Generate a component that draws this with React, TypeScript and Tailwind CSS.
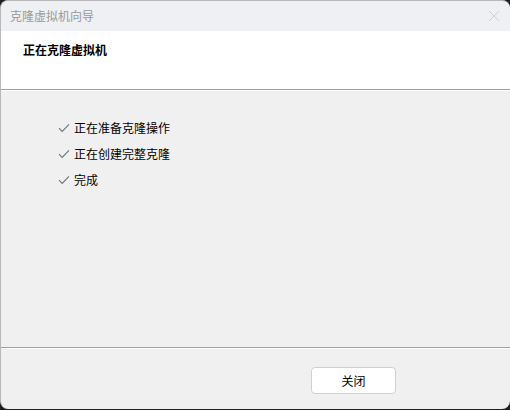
import React from "react";

function Check() {
  return (
    <svg width="12" height="10" viewBox="0 0 12 10" className="shrink-0">
      <path d="M1 5.2 L4.2 8.4 L11 1.4" fill="none" stroke="#6b7480" strokeWidth="1.1" />
    </svg>
  );
}

export default function App() {
  const font = { fontFamily: '"Noto Sans CJK SC", "Noto Sans", sans-serif' };
  return (
    <div className="w-[510px] h-[410px] bg-[#1f1f1f]" style={font}>
      <div className="w-[510px] h-[409px] bg-[#f0f0f0] rounded-[8px] border-l border-t border-[#b8b8b8] overflow-hidden flex flex-col">
        <div className="h-[30px] bg-[#eff0f3] flex items-center justify-between pl-[9px] pr-[10px] shrink-0">
          <span className="text-[12px] text-[#9a9a9a] leading-none">克隆虚拟机向导</span>
          <svg width="12" height="12" viewBox="0 0 12 12">
            <path d="M1 1 L11 11 M11 1 L1 11" stroke="#cfcfd2" strokeWidth="1" />
          </svg>
        </div>
        <div className="h-[58px] bg-white shrink-0 pl-[22px] pt-[13px] leading-none">
          <span className="block text-[12px] leading-[12px] font-bold text-black">正在克隆虚拟机</span>
        </div>
        <div className="h-px bg-[#a0a0a0] shrink-0" />
        <div className="h-px bg-white shrink-0" />
        <div className="flex-1 flex flex-col pl-[57px] pt-[28px] gap-[8px]">
          {["正在准备克隆操作", "正在创建完整克隆", "完成"].map((t) => (
            <div key={t} className="flex items-center gap-[4px] h-[18px]">
              <Check />
              <span className="text-[12px] text-black leading-none">{t}</span>
            </div>
          ))}
        </div>
        <div className="h-px bg-[#a0a0a0] shrink-0" />
        <div className="h-px bg-white shrink-0" />
        <div className="h-[60px] shrink-0 flex items-start pl-[310px] pt-[18px]">
          <button className="w-[85px] h-[27px] bg-white border border-[#d0d0d0] rounded-[4px] text-[12px] text-black flex items-center justify-center">
            关闭
          </button>
        </div>
      </div>
    </div>
  );
}
